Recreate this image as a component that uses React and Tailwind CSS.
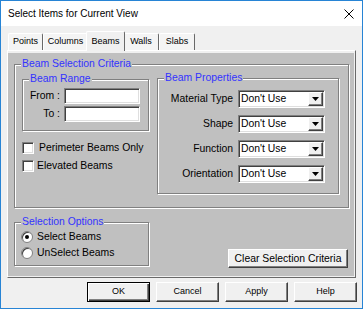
import React from "react";

const sans = "font-['Liberation_Sans',Arial,sans-serif]";
const sunken =
  "bg-white border border-t-[#808080] border-l-[#808080] border-r-white border-b-white shadow-[inset_1px_1px_0_#404040,inset_-1px_-1px_0_#dfdfdf]";
const raised =
  "bg-[#f0f0f0] border border-t-white border-l-white border-r-[#404040] border-b-[#404040] shadow-[inset_-1px_-1px_0_#808080]";

const tabs = [
  {label: "Points", w: "w-[35px]"},
  {label: "Columns", w: "w-[45px]"},
  {label: "Beams", w: "w-[39px]", active: true},
  {label: "Walls", w: "w-[36px]"},
  {label: "Slabs", w: "w-[36px]"},
];

const Group = ({title, className = "", children}) => (
  <fieldset
    className={`border border-[#808080] shadow-[inset_1px_1px_0_#fff,1px_1px_0_#fff] ${className}`}
  >
    <legend className="ml-[6px] px-[1px] bg-[#c0c0c0] text-[#3333ff] leading-[12px]">
      {title}
    </legend>
    {children}
  </fieldset>
);

const Checkbox = ({label, gap}) => (
  <div className="flex items-center h-[14px]">
    <span className={`${sunken} w-[12px] h-[12px] shrink-0`} />
    <span className={`${gap} leading-[12px]`}>{label}</span>
  </div>
);

const Radio = ({label, checked}) => (
  <div className="flex items-center h-[14px] ml-[6px]">
    <span className="w-[12px] h-[12px] rounded-full bg-white border border-[#808080] shadow-[inset_1px_1px_0_#404040] flex items-center justify-center shrink-0">
      {checked && <span className="w-[4px] h-[4px] rounded-full bg-black" />}
    </span>
    <span className="ml-[4px] leading-[12px]">{label}</span>
  </div>
);

const Select = ({label}) => (
  <div className="flex items-center">
    <span className="w-[75px] text-right leading-[12px]">{label}</span>
    <div className={`${sunken} ml-[5px] w-[87px] h-[18px] flex items-stretch p-[1px]`}>
      <span className="flex-1 pl-[1px] leading-[14px] whitespace-nowrap">Don't Use</span>
      <span className={`${raised} w-[15px] flex items-center justify-center`}>
        <svg width="7" height="4" viewBox="0 0 7 4">
          <polygon points="0,0 7,0 3.5,4" fill="#000" />
        </svg>
      </span>
    </div>
  </div>
);

const RangeRow = ({label, className = ""}) => (
  <div className={`flex items-center ${className}`}>
    <span className="w-[37px] text-right leading-[12px]">{label}</span>
    <span className={`${sunken} ml-[4px] w-[76px] h-[16px]`} />
  </div>
);

const App = () => {
  return (
    <div
      className={`w-[363px] h-[309px] border border-[#2784d5] bg-[#f0f0f0] flex flex-col text-black ${sans}`}
    >
      <div className="h-[25px] bg-white flex items-center justify-between pl-[7px] pr-[8px] shrink-0">
        <span className="text-[10px] leading-[12px]">Select Items for Current View</span>
        <svg width="10" height="10" viewBox="0 0 10 10">
          <path d="M0.5 0.5 L9.5 9.5 M9.5 0.5 L0.5 9.5" stroke="#000" strokeWidth="1" />
        </svg>
      </div>

      <div className="flex items-end h-[19px] mt-[5px] ml-[7px] text-[9px]">
        {tabs.map(tab =>
          tab.active ? (
            <div
              key={tab.label}
              className={`${tab.w} -mx-[2px] h-[20px] -mb-[1px] relative z-10 bg-[#f0f0f0] border-t border-l border-white border-r border-r-[#696969] rounded-t-[2px] flex items-center justify-center`}
            >
              {tab.label}
            </div>
          ) : (
            <div
              key={tab.label}
              className={`${tab.w} h-[17px] bg-[#f4f4f4] border-t border-l border-white border-r border-r-[#696969] rounded-t-[2px] flex items-center justify-center`}
            >
              {tab.label}
            </div>
          )
        )}
      </div>

      <div className="ml-[6px] w-[349px] h-[228px] border border-t-white border-l-white border-r-[#696969] border-b-[#696969] bg-[#f0f0f0] pt-[2px] pr-[1px] pb-[1px] flex text-[10.4px]">
        <div className="flex-1 bg-[#c0c0c0] pt-[5px] pl-[6px]">
          <Group title="Beam Selection Criteria" className="w-[335px] h-[150px]">
            <div className="flex items-start ml-[7px]">
              <div className="flex flex-col mt-[3px]">
                <Group title="Beam Range" className="w-[127px] h-[58px]">
                  <div className="flex flex-col gap-[2px] mt-[3px]">
                    <RangeRow label="From :" />
                    <RangeRow label="To :" />
                  </div>
                </Group>
                <div className="flex flex-col gap-[4px] mt-[10px]">
                  <Checkbox label="Perimeter Beams Only" gap="ml-[5px]" />
                  <Checkbox label="Elevated Beams" gap="ml-[3px]" />
                </div>
              </div>
              <Group title="Beam Properties" className="w-[182px] h-[122px] mt-[2px] ml-[8px]">
                <div className="flex flex-col gap-[7px] mt-[6px]">
                  <Select label="Material Type" />
                  <Select label="Shape" />
                  <Select label="Function" />
                  <Select label="Orientation" />
                </div>
              </Group>
            </div>
          </Group>

          <div className="flex items-start mt-[8px]">
            <Group title="Selection Options" className="w-[135px] h-[50px]">
              <div className="flex flex-col gap-[2px] mt-[2px]">
                <Radio label="Select Beams" checked />
                <Radio label="UnSelect Beams" />
              </div>
            </Group>
            <button
              className={`${raised} ml-[79px] mt-[33px] w-[120px] h-[19px] leading-[12px]`}
            >
              Clear Selection Criteria
            </button>
          </div>
        </div>
      </div>

      <div className="flex justify-end gap-[6px] pr-[5px] mt-[4px] text-[9px]">
        <button className="w-[63px] h-[20px] bg-[#f0f0f0] border border-black shadow-[inset_1px_1px_0_#fff,inset_-1px_-1px_0_#404040,inset_-2px_-2px_0_#808080]">
          OK
        </button>
        <button className={`${raised} w-[63px] h-[20px]`}>Cancel</button>
        <button className={`${raised} w-[63px] h-[20px]`}>Apply</button>
        <button className={`${raised} w-[63px] h-[20px]`}>Help</button>
      </div>
    </div>
  );
};

export default App;
